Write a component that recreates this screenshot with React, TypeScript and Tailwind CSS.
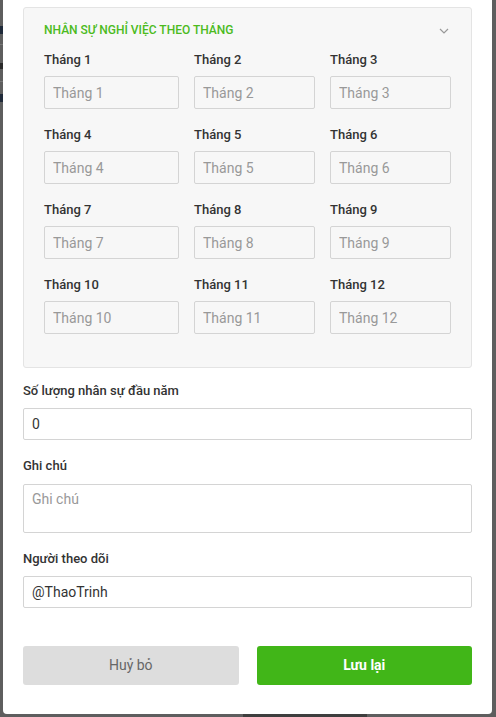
const months = Array.from({ length: 12 }, (_, i) => `Tháng ${i + 1}`)

export default function App() {
  return (
    <div
      className="relative h-[717px] w-[496px] overflow-hidden bg-[#5e5e5e]"
      style={{ fontFamily: 'Roboto, "Noto Sans", sans-serif' }}
    >
      {/* backdrop page peeking out */}
      <div className="flex flex-col pt-[26px]">
        <div className="h-[8px] w-[3px] bg-[#1f2a3a]" />
        <div className="mt-[10px] h-px w-[3px] bg-[#777]" />
        <div className="mt-[18px] h-[6px] w-[3px] bg-[#2a2a2a]" />
        <div className="mt-[12px] h-px w-[3px] bg-[#777]" />
        <div className="mt-[12px] h-[8px] w-[3px] bg-[#1f2a3a]" />
      </div>
      <div className="absolute bottom-0 left-[243px] h-[3px] w-[124px] bg-[#3e3e3e]" />

      {/* modal */}
      <div className="absolute left-[3px] top-0 flex h-[714px] w-[489px] flex-col rounded-b-[4px] bg-white px-5 pt-[7px] text-[#333]">
        <div className="rounded-[3px] border border-[#e4e4e4] bg-[#f7f7f7] px-5 pb-[33px] pt-[13px]">
          <div className="flex items-center justify-between">
            <span className="text-[12px] font-medium leading-[18px] text-[#4cbb1e]">
              NHÂN SỰ NGHỈ VIỆC THEO THÁNG
            </span>
            <svg width="10" height="6" viewBox="0 0 10 6" className="mr-[2px] mt-[2px]">
              <polyline points="1,1 5,5 9,1" fill="none" stroke="#999" strokeWidth="1.2" />
            </svg>
          </div>
          <div className="mt-[12px] grid grid-cols-[135px_121px_121px] gap-x-[15px] gap-y-[17px]">
            {months.map((m) => (
              <div key={m} className="flex flex-col">
                <label className="text-[13px] font-medium leading-[18px] text-[#333]">{m}</label>
                <input
                  placeholder={m}
                  className="mt-[7px] h-[33px] w-full rounded-[2px] border border-[#d4d4d4] bg-transparent px-[8px] text-[14px] text-[#333] outline-none placeholder:text-[#999]"
                />
              </div>
            ))}
          </div>
        </div>

        <label className="mt-[14px] text-[13px] font-medium leading-[18px]">Số lượng nhân sự đầu năm</label>
        <input
          defaultValue="0"
          className="mt-[8px] h-[32px] rounded-[2px] border border-[#d4d4d4] px-[8px] text-[14px] text-[#333] outline-none"
        />

        <label className="mt-[17px] text-[13px] font-medium leading-[18px]">Ghi chú</label>
        <textarea
          placeholder="Ghi chú"
          className="mt-[9px] h-[49px] resize-none rounded-[2px] border border-[#d4d4d4] px-[8px] py-[5px] text-[14px] leading-[18px] text-[#333] outline-none placeholder:text-[#999]"
        />

        <label className="mt-[17px] text-[13px] font-medium leading-[18px]">Người theo dõi</label>
        <input
          defaultValue="@ThaoTrinh"
          className="mt-[8px] h-[32px] rounded-[2px] border border-[#d4d4d4] px-[8px] text-[14px] text-[#333] outline-none"
        />

        <div className="mt-[38px] flex gap-[18px]">
          <button className="h-[39px] flex-1 rounded-[3px] bg-[#dddddd] text-[14px] text-[#666]">Huỷ bỏ</button>
          <button className="h-[39px] flex-1 rounded-[3px] bg-[#41b618] text-[14px] font-bold text-white">Lưu lại</button>
        </div>
      </div>
    </div>
  )
}
